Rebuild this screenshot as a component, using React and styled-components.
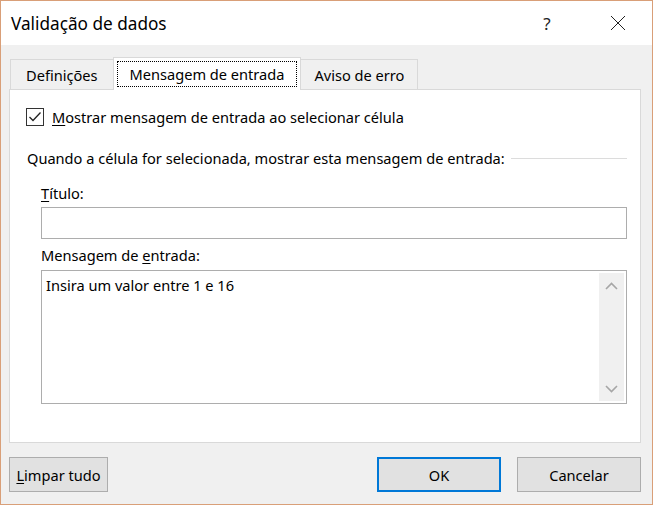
import React from "react";
import styled, { createGlobalStyle } from "styled-components";

const GlobalStyle = createGlobalStyle`
  html, body {
    margin: 0;
    padding: 0;
    background: #ffffff;
  }
  * {
    box-sizing: border-box;
  }
`;

const Window = styled.div`
  width: 653px;
  height: 505px;
  border: 1px solid #d99f78;
  display: flex;
  flex-direction: column;
  font-family: "Noto Sans", "Open Sans", sans-serif;
  font-size: 14.6px;
  color: #000;
`;

const TitleBar = styled.div`
  height: 44px;
  background: #ffffff;
  display: flex;
  align-items: center;
  padding-left: 10px;
`;

const Title = styled.div`
  flex: 1;
  font-size: 17.2px;
  color: #000;
`;

const TitleButton = styled.div`
  width: 46px;
  height: 44px;
  display: flex;
  align-items: center;
  justify-content: center;
  font-size: 17px;
  color: #222;
  margin-right: ${(p) => p.$mr || 0}px;
`;

const Body = styled.div`
  flex: 1;
  background: #f0f0f0;
  padding: 12px 11px 0 8px;
  display: flex;
  flex-direction: column;
`;

const TabList = styled.div`
  display: flex;
  align-items: flex-end;
  padding-left: 1px;
  position: relative;
  z-index: 1;
  margin-bottom: -1px;
`;

const Tab = styled.div`
  height: ${(p) => (p.$active ? 33 : 31)}px;
  padding: ${(p) => (p.$active ? "3px 3px" : `0 ${p.$pad}px`)};
  display: flex;
  align-items: center;
  background: ${(p) => (p.$active ? "#ffffff" : "#f0f0f0")};
  border: 1px solid #d9d9d9;
  border-bottom: ${(p) => (p.$active ? "none" : "1px solid #d9d9d9")};
  margin-left: ${(p) => (p.$first ? 0 : -1)}px;
  white-space: nowrap;
`;

const FocusRect = styled.div`
  height: 100%;
  padding: 0 12px;
  display: flex;
  align-items: center;
  border: 1px dotted #000;
`;

const Panel = styled.div`
  height: 354px;
  background: #ffffff;
  border: 1px solid #d9d9d9;
  padding: 17px 13px 0 16px;
  display: flex;
  flex-direction: column;
`;

const CheckRow = styled.label`
  display: flex;
  align-items: center;
  height: 20px;
  gap: 8px;
`;

const CheckBox = styled.span`
  width: 18px;
  height: 18px;
  border: 1px solid #333;
  display: flex;
  align-items: center;
  justify-content: center;
  background: #fff;
`;

const Key = styled.span`
  text-decoration: underline;
  text-underline-offset: 2px;
`;

const GroupHeader = styled.div`
  display: flex;
  align-items: center;
  height: 20px;
  margin-top: 21px;
  margin-left: 1px;
  gap: 6px;
`;

const GroupLine = styled.div`
  flex: 1;
  height: 1px;
  background: #dcdcdc;
`;

const Fields = styled.div`
  display: flex;
  flex-direction: column;
  padding-left: 15px;
`;

const FieldLabel = styled.div`
  height: 20px;
  line-height: 20px;
  margin-top: ${(p) => p.$mt}px;
`;

const TextInput = styled.div`
  height: 32px;
  margin-top: 4px;
  border: 1px solid #adadad;
  background: #fff;
`;

const TextArea = styled.div`
  height: 134px;
  margin-top: 5px;
  border: 1px solid #adadad;
  background: #fff;
  display: flex;
  padding: 2px 2px 2px 4px;
`;

const AreaText = styled.div`
  flex: 1;
  line-height: 20px;
  padding-top: 2px;
`;

const ScrollBar = styled.div`
  width: 25px;
  background: #f0f0f0;
  display: flex;
  flex-direction: column;
  justify-content: space-between;
  align-items: center;
  padding: 9px 0 8px;
`;

const Footer = styled.div`
  display: flex;
  margin-top: 14px;
  gap: 16px;
`;

const Button = styled.div`
  width: ${(p) => p.$w}px;
  height: 35px;
  display: flex;
  align-items: center;
  justify-content: center;
  background: #e1e1e1;
  border: ${(p) => (p.$default ? "2px solid #0078d7" : "1px solid #adadad")};
  margin-left: ${(p) => (p.$push ? "auto" : "0")};
`;

const Chevron = ({ up }) => (
  <svg width="13" height="8" viewBox="0 0 13 8">
    <path
      d={up ? "M1 7 L6.5 1.5 L12 7" : "M1 1 L6.5 6.5 L12 1"}
      fill="none"
      stroke="#a6a6a6"
      strokeWidth="1.6"
    />
  </svg>
);

export default function App() {
  return (
    <>
      <GlobalStyle />
      <Window>
        <TitleBar>
          <Title>Validação de dados</Title>
          <TitleButton $mr={25}>?</TitleButton>
          <TitleButton $mr={11}>
            <svg width="16" height="16" viewBox="0 0 16 16">
              <path d="M1 1 L15 15 M15 1 L1 15" stroke="#222" strokeWidth="1" />
            </svg>
          </TitleButton>
        </TitleBar>
        <Body>
          <TabList>
            <Tab $first $pad={15}>Definições</Tab>
            <Tab $active>
              <FocusRect>Mensagem de entrada</FocusRect>
            </Tab>
            <Tab $pad={13}>Aviso de erro</Tab>
          </TabList>
          <Panel>
            <CheckRow>
              <CheckBox>
                <svg width="14" height="12" viewBox="0 0 14 12">
                  <path d="M1.5 6 L5 9.5 L12.5 1.5" fill="none" stroke="#222" strokeWidth="1.3" />
                </svg>
              </CheckBox>
              <span>
                <Key>M</Key>ostrar mensagem de entrada ao selecionar célula
              </span>
            </CheckRow>
            <GroupHeader>
              <span>Quando a célula for selecionada, mostrar esta mensagem de entrada:</span>
              <GroupLine />
            </GroupHeader>
            <Fields>
              <FieldLabel $mt={15}>
                <Key>T</Key>ítulo:
              </FieldLabel>
              <TextInput />
              <FieldLabel $mt={6}>
                Mensagem de <Key>e</Key>ntrada:
              </FieldLabel>
              <TextArea>
                <AreaText>Insira um valor entre 1 e 16</AreaText>
                <ScrollBar>
                  <Chevron up />
                  <Chevron />
                </ScrollBar>
              </TextArea>
            </Fields>
          </Panel>
          <Footer>
            <Button $w={99}>
              <span>
                <Key>L</Key>impar tudo
              </span>
            </Button>
            <Button $w={124} $default $push>
              OK
            </Button>
            <Button $w={124}>Cancelar</Button>
          </Footer>
        </Body>
      </Window>
    </>
  );
}
